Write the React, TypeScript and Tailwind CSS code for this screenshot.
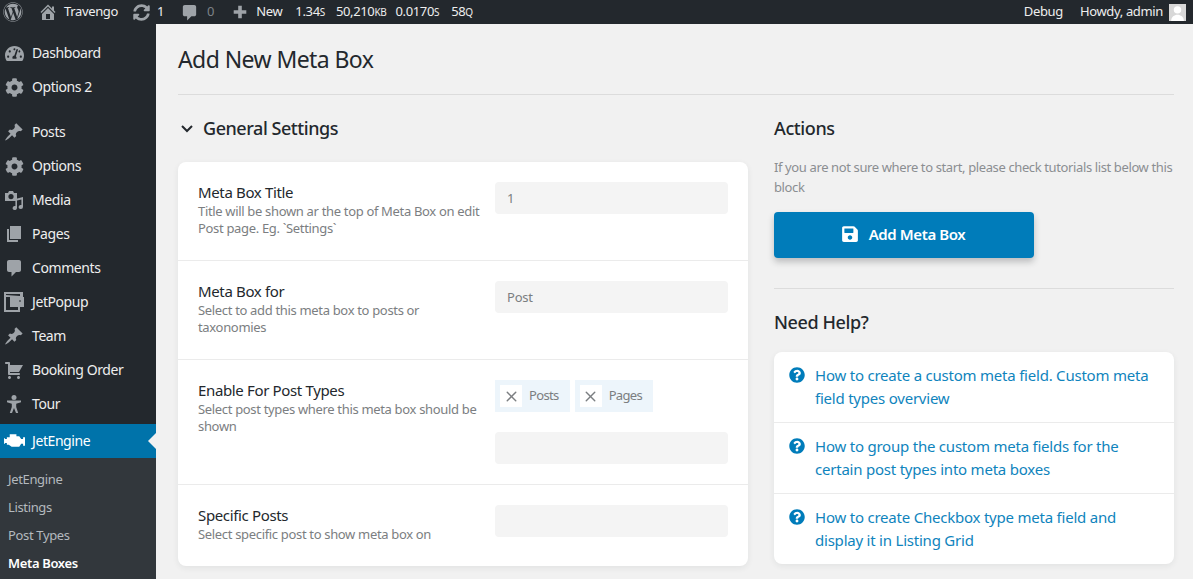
import React from 'react';
import { FaWordpress, FaSyncAlt, FaCog, FaSave, FaQuestionCircle, FaTachometerAlt } from 'react-icons/fa';
import { X } from 'lucide-react';

const Dash = ({ d, size = 20, className = '' }: { d: string; size?: number; className?: string }) => (
  <svg viewBox="0 0 20 20" width={size} height={size} className={'fill-current ' + className}>
    <path d={d} />
  </svg>
);

const PIN = 'M10.44 3.02l1.82-1.82 6.36 6.35-1.83 1.82c-1.05-.68-2.48-.57-3.41.36l-.75.75c-.92.93-1.04 2.35-.35 3.41l-1.83 1.82-2.41-2.41-2.8 2.79c-.42.42-3.38 2.71-3.8 2.29s1.86-3.39 2.28-3.81l2.79-2.79L4.1 9.36l1.83-1.82c1.05.69 2.48.57 3.4-.36l.75-.75c.93-.92 1.05-2.35.36-3.41z';
const BUBBLE = 'M5 2h10c1.100 0 2 .9 2 2v8c0 1.100-.9 2-2 2h-3l-4.500 4.500V14H5c-1.100 0-2-.9-2-2V4c0-1.100.9-2 2-2z';
const PAGES = 'M6 15V2h11v13H6zm-1 1h9v2H3V5h2v11z';
const CART = 'M6 13h9c.55 0 1 .45 1 1s-.45 1-1 1H5c-.55 0-1-.45-1-1V4H2c-.55 0-1-.45-1-1s.45-1 1-1h3c.55 0 1 .45 1 1v2h13l-4 7H6v1zm-.5 3c.83 0 1.500.67 1.500 1.500S6.330 19 5.500 19 4 18.330 4 17.500 4.670 16 5.500 16zm9 0c.83 0 1.500.67 1.500 1.500s-.67 1.500-1.500 1.500-1.500-.67-1.500-1.500.67-1.500 1.500-1.500z';
const HOME = 'M16 8.500l1.530 1.530-1.060 1.060L10 4.620l-6.470 6.470-1.060-1.060L10 2.500l4 4v-2h2v4zm-6-2.460l6 5.990V18H4v-5.970zM12 17v-5H8v5h4z';
const PLUS = 'M17 8v4h-5v5H8v-5H3V8h5V3h4v5h5z';

const MediaIcon = () => (
  <svg viewBox="0 0 20 20" className="w-5 h-5 fill-current">
    <path d="M1 3h3l1-2h4l1 2h3v8H1z M7 4a2.600 2.600 0 1 0 0 5.200A2.600 2.600 0 0 0 7 4z" fillRule="evenodd" />
    <path d="M19 7v10a2.200 2 0 1 1-1.600-1.900V9.500L13 10.600V18a2.200 2 0 1 1-1.600-1.900V9z" />
  </svg>
);

const PopupIcon = () => (
  <svg viewBox="0 0 20 20" className="w-5 h-5 fill-current">
    <path d="M0 0h19v5h1v10h-4v5H0z M2 5v13h12v-3H6V5z M16 4V2H2v1z" fillRule="evenodd" />
    <path d="M8 6h10v7H8z" />
    <path d="M16 8l1 1-1 1-1-1z" fill="#23282d" />
  </svg>
);

const TourIcon = () => (
  <svg viewBox="0 0 20 20" className="w-5 h-5 fill-current">
    <circle cx="10" cy="3.500" r="2.500" />
    <path d="M3 6.500h14v1.800l-4.800 1.400V13l2 6h-2.200L10 14l-2 5H5.800l2-6V9.700L3 8.300z" />
  </svg>
);

const EngineIcon = () => (
  <svg viewBox="0 0 22 20" className="w-[21px] h-5 fill-current">
    <path d="M6 3h7v2h3l2 3h2V6h2v9h-2v-2h-2l-2 3H8l-3-2H3v-2H1V8h2V6h3z" />
    <path d="M0 7h1v6H0z" />
  </svg>
);

type Item = { label: string; icon: React.ReactNode };

const menuTop: Item[] = [
  { label: 'Dashboard', icon: <FaTachometerAlt size={19} /> },
  { label: 'Options 2', icon: <FaCog size={19} /> },
];

const menuMain: Item[] = [
  { label: 'Posts', icon: <Dash d={PIN} /> },
  { label: 'Options', icon: <FaCog size={19} /> },
  { label: 'Media', icon: <MediaIcon /> },
  { label: 'Pages', icon: <Dash d={PAGES} /> },
  { label: 'Comments', icon: <Dash d={BUBBLE} /> },
  { label: 'JetPopup', icon: <PopupIcon /> },
  { label: 'Team', icon: <Dash d={PIN} /> },
  { label: 'Booking Order', icon: <Dash d={CART} /> },
  { label: 'Tour', icon: <TourIcon /> },
];

const subMenu = ['JetEngine', 'Listings', 'Post Types'];

const helpLinks = [
  ['How to create a custom meta field. Custom meta', 'field types overview'],
  ['How to group the custom meta fields for the', 'certain post types into meta boxes'],
  ['How to create Checkbox type meta field and', 'display it in Listing Grid'],
];

const MenuRow = ({ item }: { item: Item }) => (
  <div className="flex items-center h-[34px] text-[#eeeeee] text-[14px] tracking-[-0.42px]">
    <div className="w-[32px] flex justify-center text-[#9ea3a8] shrink-0 pr-[4px]">{item.icon}</div>
    <span className="pb-[2px]">{item.label}</span>
  </div>
);

const Field = ({ value }: { value?: string }) => (
  <div className="h-8 w-[233px] bg-[#f4f4f4] rounded flex items-center px-3 pt-[2px] text-[13px] text-[#7b7e81] tracking-[-0.2px]">{value}</div>
);

const Tag = ({ label }: { label: string }) => (
  <div className="h-8 bg-[#edf5fb] flex items-center pl-[5px] pr-[11px] gap-[7px] text-[13px] text-[#7b7e81] tracking-[-0.65px]">
    <span className="w-[22px] h-[22px] bg-white flex items-center justify-center">
      <X size={17} strokeWidth={2} className="text-[#7b7e81]" />
    </span>
    {label}
  </div>
);

const Row = ({ title, desc, children, last }: { title: string; desc: string[]; children: React.ReactNode; last?: boolean }) => (
  <div className={last ? 'flex px-5 pt-5 h-[81px]' : 'flex px-5 pt-5 border-b border-[#ebebeb]'}>
    <div className="w-[297px] shrink-0 -mt-px">
      <div className="text-[15px] leading-[22px] text-[#23282d] tracking-[-0.35px]">{title}</div>
      {desc.map((d) => (
        <div key={d} className="text-[13px] leading-[17px] text-[#7b7e81] tracking-[-0.33px]">{d}</div>
      ))}
    </div>
    <div>{children}</div>
  </div>
);

export default function App() {
  return (
    <div className="h-[579px] w-[1193px] overflow-hidden bg-[#f1f1f1] font-['Noto_Sans',sans-serif] flex flex-col">
      {/* admin bar */}
      <div className="h-6 bg-[#23282d] flex items-center text-[13px] text-[#eeeeee] tracking-[-0.35px] shrink-0 pl-[3px]">
        <FaWordpress size={20} className="text-[#9ea3a8]" />
        <Dash d={HOME} size={20} className="text-[#9ea3a8] ml-[15px]" />
        <span className="ml-[6px]">Travengo</span>
        <FaSyncAlt size={17} className="text-[#9ea3a8] ml-[15px]" />
        <span className="ml-[7px]">1</span>
        <Dash d={BUBBLE} size={19} className="text-[#9ea3a8] ml-[16px]" />
        <span className="ml-[8px] text-[#7d8287]">0</span>
        <Dash d={PLUS} size={18} className="text-[#9ea3a8] ml-[17px]" />
        <span className="ml-[7px]">New</span>
        <span className="ml-[13px]">1.34<span className="text-[10px]">S</span></span>
        <span className="ml-[11px]">50,210<span className="text-[10px]">KB</span></span>
        <span className="ml-[9px]">0.0170<span className="text-[10px]">S</span></span>
        <span className="ml-[12px]">58<span className="text-[10px]">Q</span></span>
        <span className="ml-auto">Debug</span>
        <span className="ml-[17px]">Howdy, admin</span>
        <div className="ml-[6px] mr-[7px] w-[17px] h-[17px] bg-[#d8d8d8] flex items-end justify-center overflow-hidden">
          <svg viewBox="0 0 16 16" className="w-[17px] h-[17px] fill-white">
            <circle cx="8" cy="5.500" r="3.500" />
            <path d="M2 16c0-4 3-6 6-6s6 2 6 6z" />
          </svg>
        </div>
      </div>

      <div className="flex flex-1 min-h-0">
        {/* sidebar */}
        <div className="w-[156px] bg-[#23282d] shrink-0 pt-3">
          {menuTop.map((m) => <MenuRow key={m.label} item={m} />)}
          <div className="h-[11px]" />
          {menuMain.map((m) => <MenuRow key={m.label} item={m} />)}
          <div className="h-[3px]" />
          <div className="flex items-center h-[34px] bg-[#0073aa] text-white text-[14px] tracking-[-0.42px]">
            <div className="w-[32px] flex justify-center pr-[4px] shrink-0"><EngineIcon /></div>
            <span className="pb-[2px]">JetEngine</span>
            <div className="ml-auto w-0 h-0 border-y-[8px] border-y-transparent border-r-[8px] border-r-[#f1f1f1]" />
          </div>
          <div className="bg-[#32373c] h-[200px] pt-2 pl-2 text-[13px] text-[#b4b9be] tracking-[-0.35px]">
            {subMenu.map((s) => (
              <div key={s} className="h-7 flex items-center">{s}</div>
            ))}
            <div className="h-7 flex items-center font-semibold text-white">Meta Boxes</div>
          </div>
        </div>

        {/* content */}
        <div className="flex-1 pl-[22px] pr-[19px] min-w-0">
          <h1 className="h-[71px] pt-[19px] text-[23px] leading-[32px] text-[#23282d] border-b border-[#dcdcdc] tracking-[-0.58px]">Add New Meta Box</h1>

          <div className="flex gap-[26px]">
            <div className="w-[570px] shrink-0">
              <div className="flex items-center h-[67px] text-[#23282d]">
                <svg viewBox="0 0 12 8" className="w-3 h-2 fill-none stroke-[#23282d] stroke-2 ml-[3px]">
                  <path d="M1 1l5 5 5-5" />
                </svg>
                <span className="ml-[10px] text-[18px] font-medium tracking-[-0.45px]">General Settings</span>
              </div>
              <div className="bg-white rounded-lg shadow-[0_2px_6px_rgba(35,40,45,0.07)]">
                <div className="h-[99px]">
                  <Row title="Meta Box Title" desc={['Title will be shown ar the top of Meta Box on edit', 'Post page. Eg. `Settings`']}>
                    <Field value="1" />
                    <div className="h-[46px]" />
                  </Row>
                </div>
                <div className="h-[99px]">
                  <Row title="Meta Box for" desc={['Select to add this meta box to posts or', 'taxonomies']}>
                    <Field value="Post" />
                    <div className="h-[46px]" />
                  </Row>
                </div>
                <div className="h-[125px]">
                  <Row title="Enable For Post Types" desc={['Select post types where this meta box should be', 'shown']}>
                    <div className="flex gap-[5px] mb-5">
                      <Tag label="Posts" />
                      <Tag label="Pages" />
                    </div>
                    <Field />
                    <div className="h-5" />
                  </Row>
                </div>
                <Row last title="Specific Posts" desc={['Select specific post to show meta box on']}>
                  <Field />
                </Row>
              </div>
            </div>

            <div className="w-[400px]">
              <div className="h-[67px] flex items-center text-[18px] font-medium text-[#23282d] tracking-[-0.4px]">Actions</div>
              <div className="text-[13px] leading-5 text-[#8b8e91] mt-[-5px] tracking-[-0.38px] whitespace-nowrap">
                <div>If you are not sure where to start, please check tutorials list below this</div>
                <div>block</div>
              </div>
              <div className="mt-[15px] w-[260px] h-[46px] pb-[2px] pr-[2px] bg-[#007cba] rounded flex items-center justify-center gap-[10px] text-white text-[15px] font-semibold tracking-[-0.4px] shadow-[0_4px_6px_rgba(35,40,45,0.25)]">
                <FaSave size={18} />
                Add Meta Box
              </div>
              <div className="mt-[30px] border-t border-[#dcdcdc]" />
              <div className="h-[63px] pt-[4px] flex items-center text-[18px] font-medium text-[#23282d] tracking-[-0.4px]">Need Help?</div>
              <div className="bg-white rounded-lg shadow-[0_2px_6px_rgba(35,40,45,0.07)]">
                {helpLinks.map((lines, i) => (
                  <div key={lines[0]} className={i < 2 ? 'h-[71px] flex pl-[15px] pt-3 border-b border-[#ebebeb]' : 'h-[70px] flex pl-[15px] pt-3'}>
                    <FaQuestionCircle size={16} className="text-[#007cba] mt-[3px] shrink-0" />
                    <div className="ml-[10px] text-[15px] leading-[23px] text-[#0f84bd] tracking-[-0.22px]">
                      {lines.map((l) => <div key={l}>{l}</div>)}
                    </div>
                  </div>
                ))}
              </div>
            </div>
          </div>
        </div>
      </div>
    </div>
  );
}
